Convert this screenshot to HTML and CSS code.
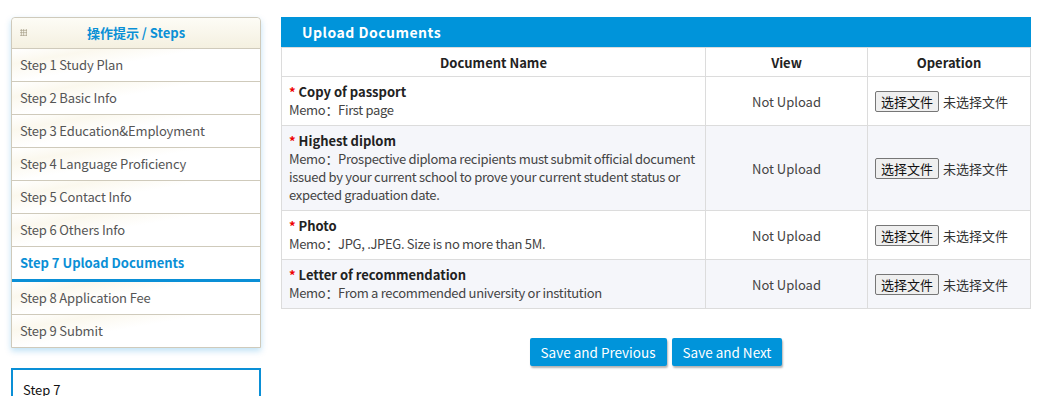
FILE: index.html
```html
<!DOCTYPE html>
<html lang="en">
<head>
    <meta charset="UTF-8">
    <title>Upload Documents</title>
    <link rel="stylesheet" href="styles.css">
</head>
<body class="page">
<div class="root">
    <div class="side">
        <div class="steps">
            <div class="steps-head">
                <span class="grip"></span>
                <span class="steps-title">操作提示 / Steps</span>
            </div>
            <div class="step">Step 1 Study Plan</div>
            <div class="step">Step 2 Basic Info</div>
            <div class="step">Step 3 Education&amp;Employment</div>
            <div class="step">Step 4 Language Proficiency</div>
            <div class="step">Step 5 Contact Info</div>
            <div class="step">Step 6 Others Info</div>
            <div class="step active">Step 7 Upload Documents</div>
            <div class="step">Step 8 Application Fee</div>
            <div class="step">Step 9 Submit</div>
        </div>
        <div class="tip-box">Step 7</div>
    </div>
    <div class="main">
        <div class="main-head">Upload Documents</div>
        <table class="docs">
            <thead>
            <tr>
                <th class="col-name">Document Name</th>
                <th class="col-view">View</th>
                <th class="col-op">Operation</th>
            </tr>
            </thead>
            <tbody>
            <tr>
                <td class="doc">
                    <div class="doc-title"><span class="req">*</span>Copy of passport</div>
                    <div class="memo">Memo：First page</div>
                </td>
                <td class="view">Not Upload</td>
                <td class="op"><span class="file-btn">选择文件</span><span class="file-none">未选择文件</span></td>
            </tr>
            <tr>
                <td class="doc">
                    <div class="doc-title"><span class="req">*</span>Highest diplom</div>
                    <div class="memo">Memo：Prospective diploma recipients must submit official document issued by your current school to prove your current student status or expected graduation date.</div>
                </td>
                <td class="view">Not Upload</td>
                <td class="op"><span class="file-btn">选择文件</span><span class="file-none">未选择文件</span></td>
            </tr>
            <tr>
                <td class="doc">
                    <div class="doc-title"><span class="req">*</span>Photo</div>
                    <div class="memo">Memo：JPG, .JPEG. Size is no more than 5M.</div>
                </td>
                <td class="view">Not Upload</td>
                <td class="op"><span class="file-btn">选择文件</span><span class="file-none">未选择文件</span></td>
            </tr>
            <tr>
                <td class="doc">
                    <div class="doc-title"><span class="req">*</span>Letter of recommendation</div>
                    <div class="memo">Memo：From a recommended university or institution</div>
                </td>
                <td class="view">Not Upload</td>
                <td class="op"><span class="file-btn">选择文件</span><span class="file-none">未选择文件</span></td>
            </tr>
            </tbody>
        </table>
        <div class="actions">
            <button class="btn">Save and Previous</button>
            <button class="btn">Save and Next</button>
        </div>
    </div>
</div>
</body>
</html>
```

FILE: styles.css
```css
body {
    margin: 0;
    font-family: "Noto Sans CJK SC", "Noto Sans", sans-serif;
    font-size: 13px;
    color: #333;
    background: #fff;
}

.root {
    display: flex;
    gap: 20px;
    padding: 17px 0 0 11px;
}

.side {
    width: 250px;
    display: flex;
    flex-direction: column;
    gap: 20px;
}

.steps {
    border: 1px solid #cfcabb;
    border-radius: 4px 4px 0 0;
    box-shadow: 0 3px 6px rgba(0, 140, 220, 0.25);
    background: #fff;
}

.steps-head {
    position: relative;
    height: 31px;
    padding-bottom: 2px;
    box-sizing: border-box;
    display: flex;
    align-items: center;
    justify-content: center;
    background: linear-gradient(#fdfcf6, #f4f0e0);
    border-bottom: 1px solid #cfcabb;
    border-radius: 4px 4px 0 0;
}

.grip {
    position: absolute;
    left: 8px;
    top: 11px;
    width: 7px;
    height: 7px;
    background-image: radial-gradient(circle, #a8a08a 0.8px, transparent 1px);
    background-size: 2.5px 2.5px;
}

.steps-title {
    color: #0a90d6;
    font-weight: bold;
    font-size: 13px;
}

.step {
    height: 32px;
    line-height: 32px;
    padding-left: 8px;
    color: #555;
    letter-spacing: -0.15px;
    border-bottom: 1px solid #cfcabb;
    background: linear-gradient(170deg, #fff 0%, #fbf8ee 20%, #fff 45%, #fff 100%);
}

.step:last-child {
    border-bottom: none;
}

.step.active {
    height: 32px;
    color: #0a8fd6;
    font-weight: bold;
    letter-spacing: 0;
    border-bottom: 3px solid #0a8fd6;
    background: #fff;
}

.tip-box {
    border: 2px solid #0a8fd6;
    height: 60px;
    padding: 10px 10px;
    color: #111;
}

.main {
    width: 750px;
}

.main-head {
    height: 30px;
    line-height: 30px;
    background: #0094da;
    color: #fff;
    font-weight: bold;
    font-size: 14px;
    padding-left: 21px;
    letter-spacing: 0.5px;
}

.docs {
    width: 750px;
    border-collapse: collapse;
    table-layout: fixed;
}

.docs th,
.docs td {
    border: 1px solid #dcdcdc;
    padding: 6px 7px;
    line-height: 17px;
}

.docs th {
    color: #222;
    font-weight: bold;
    height: 15px;
    padding: 6px 7px 5px;
}

.docs td.doc {
    padding-right: 4px;
}

.col-name { width: 409px; }
.col-view { width: 147px; }

.docs tbody tr:nth-child(even) {
    background: #f5f6fa;
}

.doc-title {
    color: #222;
    font-weight: bold;
    line-height: 18px;
}

.req {
    color: #e00;
    margin-right: 3px;
}

.memo {
    line-height: 18px;
    color: #444;
    letter-spacing: -0.32px;
}

.view {
    text-align: center;
    color: #444;
}

.op {
    white-space: nowrap;
}

.file-btn {
    display: inline-block;
    padding: 1px 5px;
    border: 1px solid #767676;
    border-radius: 2px;
    background: #efefef;
    color: #111;
    line-height: 17px;
    margin-right: 4px;
}

.file-none {
    color: #333;
}

.actions {
    display: flex;
    justify-content: center;
    gap: 5px;
    margin-top: 29px;
}

.btn {
    font-family: inherit;
    font-size: 13.5px;
    color: #fff;
    background: #0094da;
    border: none;
    border-radius: 2px;
    height: 28px;
    padding: 0 11px;
    box-shadow: 1px 2px 2px rgba(0, 0, 0, 0.3);
}
```
